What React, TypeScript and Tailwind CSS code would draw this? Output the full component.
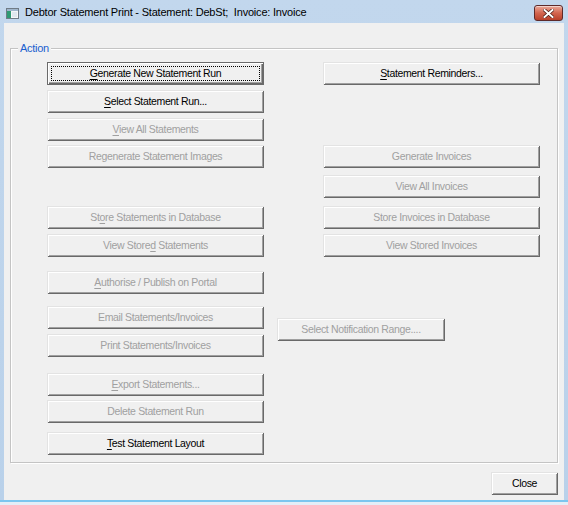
import React from "react";
import clsx from "clsx";

type BtnProps = {
  label: string;
  u?: number;
  disabled?: boolean;
  def?: boolean;
  className?: string;
};

// Classic 3D push button with optional mnemonic underline
function Btn({ label, u, disabled, def, className }: BtnProps) {
  const text =
    u === undefined ? (
      label
    ) : (
      <>
        {label.slice(0, u)}
        <span className="underline underline-offset-[2px]">{label[u]}</span>
        {label.slice(u + 1)}
      </>
    );
  return (
    <div
      className={clsx(
        "relative flex h-[23px] shrink-0 items-center justify-center bg-[#f0f0f0] text-[10.5px] leading-none tracking-[-0.35px] whitespace-nowrap",
        disabled ? "text-[#a0a0a0]" : "text-black",
        def
          ? "border border-[#6a6a6a] shadow-[inset_1px_1px_0_#ffffff,inset_-1px_-1px_0_#696969,inset_-2px_-2px_0_#a0a0a0]"
          : "shadow-[inset_1px_1px_0_#e3e3e3,inset_-1px_-1px_0_#696969,inset_2px_2px_0_#ffffff,inset_-2px_-2px_0_#a0a0a0]",
        className
      )}
    >
      {def && (
        <div className="pointer-events-none absolute inset-[3px] border border-dotted border-black" />
      )}
      <span className="relative -mt-[1px]">{text}</span>
    </div>
  );
}

function AppIcon() {
  return (
    <svg width="13" height="11" viewBox="0 0 13 11" className="shrink-0">
      <rect x="0.5" y="0.5" width="12" height="10" fill="#f4f6f8" stroke="#6f7b86" />
      <rect x="1" y="1" width="11" height="2" fill="#9fb6cc" />
      <rect x="1" y="3" width="4" height="7" fill="#2f9a73" />
      <rect x="6" y="4" width="5" height="5" fill="#dfe7ee" />
    </svg>
  );
}

function CloseBox() {
  return (
    <div className="flex h-[16px] w-[29px] items-center justify-center rounded-[3px] border border-[#5d2a2a] bg-gradient-to-b from-[#e9a99b] via-[#d3654f] to-[#b8402b] shadow-[inset_0_1px_0_rgba(255,255,255,0.5)]">
      <svg width="11" height="9" viewBox="0 0 11 9">
        <path
          d="M1.5 1 L9.5 8 M9.5 1 L1.5 8"
          stroke="#4a1a14"
          strokeWidth="3.4"
          strokeLinecap="square"
        />
        <path
          d="M1.5 1 L9.5 8 M9.5 1 L1.5 8"
          stroke="#ffffff"
          strokeWidth="2"
          strokeLinecap="square"
        />
      </svg>
    </div>
  );
}

export default function App() {
  return (
    <div className="flex h-[505px] w-[568px] flex-col overflow-hidden bg-gradient-to-b from-[#c2d7ed] to-[#b9d1ea] font-['Liberation_Sans',Arial,sans-serif]">
      {/* Title bar */}
      <div className="flex h-[23px] shrink-0 items-start">
        <div className="ml-[6px] mt-[8px]">
          <AppIcon />
        </div>
        <div className="ml-[6px] mt-[7px] text-[11px] leading-none tracking-[-0.2px] text-black whitespace-pre">
          Debtor Statement Print - Statement: DebSt;  Invoice: Invoice
        </div>
        <div className="ml-auto mr-[5px] mt-[5px]">
          <CloseBox />
        </div>
      </div>

      {/* Client area */}
      <div className="mx-[4px] flex h-[477px] shrink-0 flex-col bg-[#f0f0f0] px-[6px] pt-[25px]">
        {/* Group box */}
        <div className="relative h-[415px] border border-[#c4c4c4] shadow-[inset_1px_1px_0_#ffffff,1px_1px_0_#ffffff]">
          <div className="absolute left-[7px] -top-[8px] bg-[#f0f0f0] px-[2px] text-[11px] leading-[14px] tracking-[-0.3px] text-[#1a5fcf]">
            Action
          </div>

          <div className="flex flex-col pl-[36px] pt-[13px]">
            <div className="flex">
              <Btn label="Generate New Statement Run" u={0} def className="w-[217px]" />
              <Btn label="Statement Reminders..." u={0} className="ml-[59px] w-[217px]" />
            </div>
            <div className="mt-[5px] flex">
              <Btn label="Select Statement Run..." u={0} className="w-[217px]" />
            </div>
            <div className="mt-[5px] flex">
              <Btn label="View All Statements" u={0} disabled className="w-[217px]" />
            </div>
            <div className="mt-[4px] flex">
              <Btn label="Regenerate Statement Images" disabled className="w-[217px]" />
              <Btn label="Generate Invoices" disabled className="ml-[59px] w-[217px]" />
            </div>
            <div className="mt-[7px] flex">
              <Btn label="View All Invoices" disabled className="ml-[276px] w-[217px]" />
            </div>
            <div className="mt-[8px] flex">
              <Btn label="Store Statements in Database" u={2} disabled className="w-[217px]" />
              <Btn label="Store Invoices in Database" disabled className="ml-[59px] w-[217px]" />
            </div>
            <div className="mt-[5px] flex">
              <Btn label="View Stored Statements" u={10} disabled className="w-[217px]" />
              <Btn label="View Stored Invoices" disabled className="ml-[59px] w-[217px]" />
            </div>
            <div className="mt-[14px] flex">
              <Btn label="Authorise / Publish on Portal" u={0} disabled className="w-[217px]" />
            </div>
            <div className="mt-[12px] flex items-start">
              <div className="flex flex-col">
                <Btn label="Email Statements/Invoices" disabled className="w-[217px]" />
                <Btn label="Print Statements/Invoices" disabled className="mt-[5px] w-[217px]" />
              </div>
              <Btn label="Select Notification Range...." disabled className="ml-[13px] mt-[12px] w-[168px]" />
            </div>
            <div className="mt-[16px] flex flex-col">
              <Btn label="Export Statements..." u={0} disabled className="w-[217px]" />
              <Btn label="Delete Statement Run" disabled className="mt-[4px] w-[217px]" />
            </div>
            <div className="mt-[9px] flex">
              <Btn label="Test Statement Layout" u={0} className="w-[217px]" />
            </div>
          </div>
        </div>

        {/* Dialog footer */}
        <div className="mt-[9px] flex justify-end">
          <Btn label="Close" className="w-[67px]" />
        </div>
      </div>

      {/* Bottom frame edge */}
      <div className="h-[2px] shrink-0 bg-[#7cc6ef]" />
      <div className="flex-1 bg-[#e4eef7]" />
    </div>
  );
}
